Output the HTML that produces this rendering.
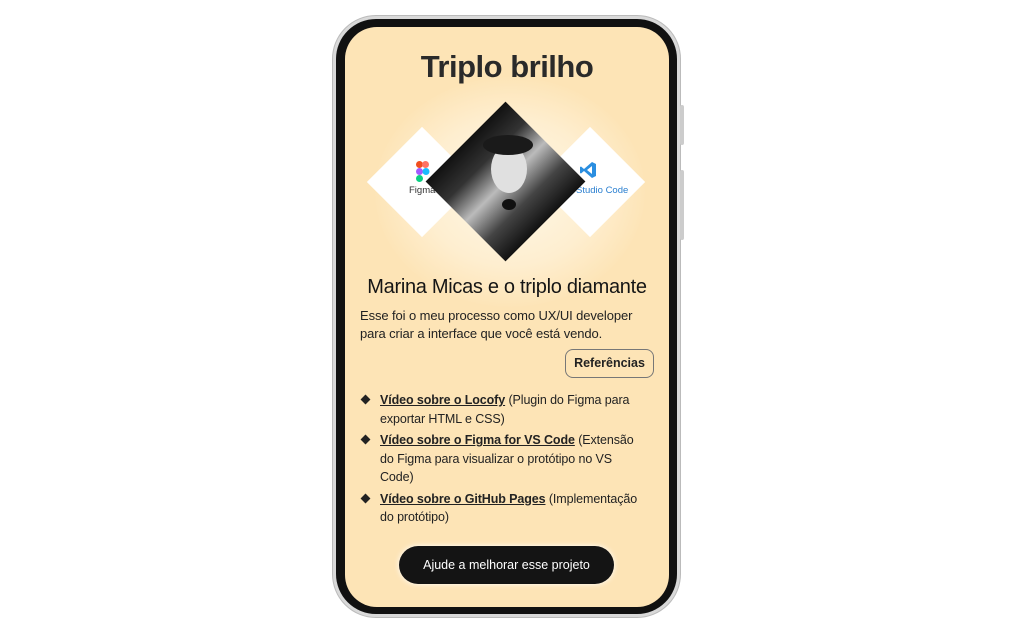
<!DOCTYPE html>
<html><head><meta charset="utf-8"><style>
*{margin:0;padding:0;box-sizing:border-box}
body{width:1015px;height:640px;background:#fff;position:relative;overflow:hidden;font-family:"Liberation Sans",sans-serif;color:#1c1c1c}
.outer{position:absolute;left:332px;top:15px;width:349px;height:603px;border-radius:44px;background:#d9d9d9;border:1px solid #bbb}
.bez{position:absolute;left:336px;top:19px;width:341px;height:595px;border-radius:40px;background:#111}
.scr{position:absolute;left:345px;top:27px;width:324px;height:580px;border-radius:32px;background:#fde4b6;overflow:hidden}
.btnside{position:absolute;left:680px;width:4px;background:#ccc;border-radius:2px}
.abs{position:absolute}
.glow{position:absolute;left:30px;top:50px;width:270px;height:230px;border-radius:50%;background:radial-gradient(ellipse at center,#fff8e8 0%,rgba(255,245,225,.6) 45%,rgba(253,228,182,0) 72%)}
.dia{position:absolute;background:#fff;transform:rotate(45deg)}
h1{position:absolute;left:0;width:324px;top:22px;text-align:center;font-size:31px;font-weight:bold;color:#2a2a2a;letter-spacing:-0.5px}
h2{position:absolute;left:0;width:324px;top:249px;text-align:center;font-size:20px;font-weight:normal;color:#151515;letter-spacing:-0.3px}
p.d{position:absolute;left:15px;top:280px;font-size:13px;line-height:18px;color:#222;letter-spacing:-0.1px}
.ref{position:absolute;left:220px;top:322px;width:89px;height:29px;border:1px solid #777;border-radius:8px;font-size:12.5px;font-weight:bold;text-align:center;line-height:27px;color:#222}
ul{position:absolute;left:14px;top:364px;width:310px;list-style:none;font-size:12.5px;line-height:18.5px;color:#222;letter-spacing:-0.1px;white-space:nowrap}
li{position:relative;padding-left:21px;margin-bottom:3px}
li:before{content:"";position:absolute;left:3px;top:5px;width:7px;height:7px;background:#222;transform:rotate(45deg)}
li b{text-decoration:underline}
.cta{position:absolute;left:54px;top:519px;width:215px;height:38px;border-radius:19px;background:#141414;color:#fff;font-size:12.5px;text-align:center;line-height:38px;box-shadow:0 0 6px #fff}
</style></head><body>
<div class="outer"></div>
<div class="btnside" style="top:105px;height:40px"></div>
<div class="btnside" style="top:170px;height:70px"></div>
<div class="bez"></div>
<div class="scr">
 <div class="glow"></div>
 <h1>Triplo brilho</h1>
 <div class="dia" style="left:38px;top:116px;width:78px;height:78px"></div>
 <div class="dia" style="left:206px;top:116px;width:78px;height:78px"></div>
 <svg class="abs" style="left:71px;top:134px" width="14" height="22" viewBox="0 0 14 22"><rect x="0" y="0" width="7" height="7" rx="3.5" fill="#f24e1e"/><rect x="6" y="0" width="7" height="7" rx="3.5" fill="#ff7262"/><rect x="0" y="7" width="7" height="7" rx="3.5" fill="#a259ff"/><circle cx="10" cy="10.5" r="3.5" fill="#1abcfe"/><rect x="0" y="14" width="7" height="7" rx="3.5" fill="#0acf83"/></svg>
 <div class="abs" style="left:64px;top:158px;font-size:9.5px;color:#333">Figma</div>
 <svg class="abs" style="left:234px;top:134px" width="18" height="18" viewBox="0 0 18 18"><path d="M13 1 L17 3 V15 L13 17 L5 10 L2 12.5 L1 12 V6 L2 5.5 L5 8 Z M13 5 L8 9 L13 13 Z" fill="#2a8ee0"/></svg>
 <div class="abs" style="left:231px;top:158px;font-size:9.5px;color:#2a7fd0">Studio Code</div>
 <div class="dia" style="left:104px;top:98px;width:113px;height:113px;background:linear-gradient(90deg,#111 0%,#333 25%,#bbb 50%,#444 75%,#111 100%);overflow:hidden"></div>
 <div class="abs" style="left:146px;top:118px;width:36px;height:48px;border-radius:50%;background:#e0e0e0"></div>
 <div class="abs" style="left:138px;top:108px;width:50px;height:20px;border-radius:50%;background:#1a1a1a"></div>
 <div class="abs" style="left:157px;top:172px;width:14px;height:11px;border-radius:50%;background:#111"></div>
 <h2>Marina Micas e o triplo diamante</h2>
 <p class="d">Esse foi o meu processo como UX/UI developer<br>para criar a interface que você está vendo.</p>
 <div class="ref">Referências</div>
 <ul>
  <li><b>Vídeo sobre o Locofy</b> (Plugin do Figma para<br>exportar HTML e CSS)</li>
  <li><b>Vídeo sobre o Figma for VS Code</b> (Extensão<br>do Figma para visualizar o protótipo no VS<br>Code)</li>
  <li><b>Vídeo sobre o GitHub Pages</b> (Implementação<br>do protótipo)</li>
 </ul>
 <div class="cta">Ajude a melhorar esse projeto</div>
</div>
</body></html>
